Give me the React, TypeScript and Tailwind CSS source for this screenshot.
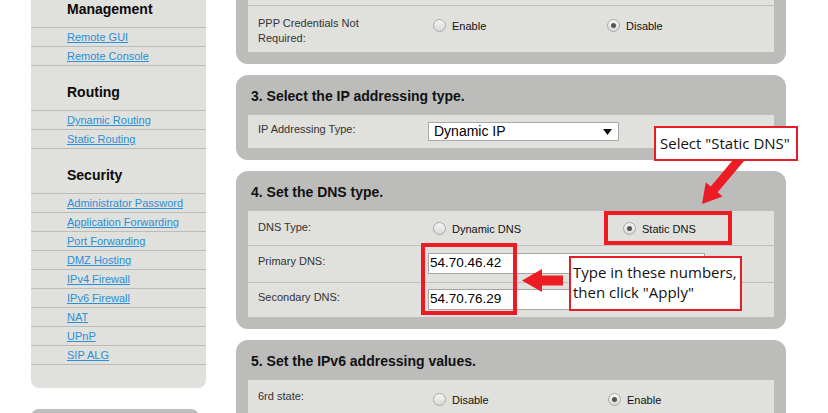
import React from "react";

function Radio({ checked, label }: { checked?: boolean; label: string }) {
  return (
    <span className="flex items-start">
      <span className="flex h-[13px] w-[13px] shrink-0 items-center justify-center rounded-full border border-[#a8a8a8] bg-gradient-to-b from-[#f6f6f6] to-[#d9d9d9]">
        {checked && <span className="h-[5px] w-[5px] rounded-full bg-[#555555]" />}
      </span>
      <span className="ml-[6px] pt-[1px] text-[11px] leading-[13px] text-[#111111]">{label}</span>
    </span>
  );
}

function SideHeading({ children }: { children: React.ReactNode }) {
  return (
    <div className="h-[45px] border-b border-[#bcbcba] pl-9 pt-[18px] text-[14px] font-bold leading-4 text-[#0a0a0a]">
      {children}
    </div>
  );
}

function SideLink({ children }: { children: React.ReactNode }) {
  return (
    <div className="h-[19px] border-b border-[#bcbcba] pl-9 pt-[1px] text-[11px] leading-[17px]">
      <a href="#" className="text-[#2b8fd9] underline">
        {children}
      </a>
    </div>
  );
}

function PanelHeading({ children }: { children?: React.ReactNode }) {
  return (
    <div className="h-[40px] pl-[3px] pt-[13px] text-[14px] font-bold leading-4 text-[#111111]">{children}</div>
  );
}

export default function App() {
  return (
    <div className="relative h-[413px] w-[828px] overflow-hidden bg-white font-['Liberation_Sans',Arial,sans-serif]">
      <div className="flex items-start pl-[31px]">
        {/* Sidebar */}
        <div className="mt-[-17px] flex w-[175px] flex-col">
          <div className="rounded-b-[8px] bg-[#e0e0dc] pb-[23px]">
            <SideHeading>Management</SideHeading>
            <SideLink>Remote GUI</SideLink>
            <SideLink>Remote Console</SideLink>
            <SideHeading>Routing</SideHeading>
            <SideLink>Dynamic Routing</SideLink>
            <SideLink>Static Routing</SideLink>
            <SideHeading>Security</SideHeading>
            <SideLink>Administrator Password</SideLink>
            <SideLink>Application Forwarding</SideLink>
            <SideLink>Port Forwarding</SideLink>
            <SideLink>DMZ Hosting</SideLink>
            <SideLink>IPv4 Firewall</SideLink>
            <SideLink>IPv6 Firewall</SideLink>
            <SideLink>NAT</SideLink>
            <SideLink>UPnP</SideLink>
            <SideLink>SIP ALG</SideLink>
          </div>
          <div className="mt-[21px] h-[40px] w-[168px] rounded-t-[8px] bg-[#bdbdbb]" />
        </div>

        {/* Main */}
        <div className="ml-[30px] mt-[-69px] flex w-[550px] flex-col gap-[11px]">
          {/* Panel 2 (partial, scrolled off the top) */}
          <div className="rounded-[12px] bg-[#bcbdbb] px-3 pb-3">
            <PanelHeading />
            <div className="bg-[#e0e0dc]">
              <div className="h-[35px] border-b border-[#bfbfbd]" />
              <div className="flex h-[46px] items-start">
                <div className="w-[180px] pl-[10px] pt-[10px] text-[11px] leading-[15px] text-[#333333]">
                  PPP Credentials Not
                  <br />
                  Required:
                </div>
                <div className="flex w-[174px] pl-[5px] pt-[13px]">
                  <Radio label="Enable" />
                </div>
                <div className="flex pl-[5px] pt-[13px]">
                  <Radio checked label="Disable" />
                </div>
              </div>
            </div>
          </div>

          {/* Panel 3 */}
          <div className="rounded-[12px] bg-[#bcbdbb] px-3 pb-3">
            <PanelHeading>3. Select the IP addressing type.</PanelHeading>
            <div className="flex h-[33px] items-start bg-[#e0e0dc]">
              <div className="w-[180px] pl-[10px] pt-[7px] text-[11px] leading-[15px] text-[#333333]">IP Addressing Type:</div>
              <div className="relative mt-[7px] flex h-[19px] w-[191px] items-center border border-[#a9a9a9] bg-white pl-[5px] text-[14px] leading-[17px] text-black">
                Dynamic IP
                <svg className="absolute right-[6px] top-[6px]" width="9" height="6" viewBox="0 0 9 6">
                  <polygon points="0,0 9,0 4.5,6" fill="#111111" />
                </svg>
              </div>
            </div>
          </div>

          {/* Panel 4 */}
          <div className="rounded-[12px] bg-[#bcbdbb] px-3 pb-3">
            <PanelHeading>4. Set the DNS type.</PanelHeading>
            <div className="bg-[#e0e0dc]">
              <div className="flex h-[35px] items-start border-b border-[#bfbfbd]">
                <div className="w-[180px] pl-[10px] pt-[9px] text-[11px] leading-[15px] text-[#333333]">DNS Type:</div>
                <div className="flex w-[190px] pl-[5px] pt-[11px]">
                  <Radio label="Dynamic DNS" />
                </div>
                <div className="flex pl-[5px] pt-[11px]">
                  <Radio checked label="Static DNS" />
                </div>
              </div>
              <div className="flex h-[37px] items-start border-b border-[#bfbfbd]">
                <div className="w-[180px] pl-[10px] pt-[8px] text-[11px] leading-[15px] text-[#333333]">Primary DNS:</div>
                <div className="mt-[7px] flex h-[21px] w-[277px] items-center border border-[#a4a4a4] bg-white pl-[1px] text-[13.5px] text-black">
                  54.70.46.42
                </div>
              </div>
              <div className="flex h-[34px] items-start">
                <div className="w-[180px] pl-[10px] pt-[7px] text-[11px] leading-[15px] text-[#333333]">Secondary DNS:</div>
                <div className="mt-[6px] flex h-[21px] w-[277px] items-center border border-[#a4a4a4] bg-white pl-[1px] text-[13.5px] text-black">
                  54.70.76.29
                </div>
              </div>
            </div>
          </div>

          {/* Panel 5 */}
          <div className="rounded-[12px] bg-[#bcbdbb] px-3 pb-3">
            <PanelHeading>5. Set the IPv6 addressing values.</PanelHeading>
            <div className="bg-[#e0e0dc]">
              <div className="flex h-[40px] items-start border-b border-[#bfbfbd]">
                <div className="w-[180px] pl-[10px] pt-[9px] text-[11px] leading-[15px] text-[#333333]">6rd state:</div>
                <div className="flex w-[175px] pl-[5px] pt-[13px]">
                  <Radio label="Disable" />
                </div>
                <div className="flex pl-[5px] pt-[13px]">
                  <Radio checked label="Enable" />
                </div>
              </div>
              <div className="h-[40px]" />
            </div>
          </div>
        </div>
      </div>

      {/* Annotation overlays */}
      <svg className="pointer-events-none absolute left-0 top-0" width="828" height="413" viewBox="0 0 828 413">
        <g transform="translate(702 204) rotate(130)">
          <polygon points="0,0 -19,-11 -19,-4.5 -62,-4.5 -62,4.5 -19,4.5 -19,11" fill="#ed1c24" />
        </g>
        <polygon
          points="522,280.5 542,269 542,275.5 563,275.5 563,285.5 542,285.5 542,292"
          fill="#ed1c24"
        />
      </svg>

      <div className="pointer-events-none absolute left-[421px] top-[243px] h-[72px] w-[96px] border-4 border-[#ed1c24]" />
      <div className="pointer-events-none absolute left-[604px] top-[211px] h-[34px] w-[128px] border-4 border-[#ed1c24]" />

      <div className="absolute left-[654px] top-[126px] h-[35px] w-[144px] border-2 border-[#e31e26] bg-white pl-[4px] pt-[5px] font-['Open_Sans',sans-serif] text-[15px] leading-[20px] text-[#111111]">
        Select &quot;Static DNS&quot;
      </div>

      <div className="absolute left-[569px] top-[256px] h-[55px] w-[173px] border-2 border-[#e31e26] bg-white pl-[2px] pt-[4px] font-['Open_Sans',sans-serif] text-[15px] leading-[20px] text-[#111111]">
        Type in these numbers,
        <br />
        then click &quot;Apply&quot;
      </div>
    </div>
  );
}
